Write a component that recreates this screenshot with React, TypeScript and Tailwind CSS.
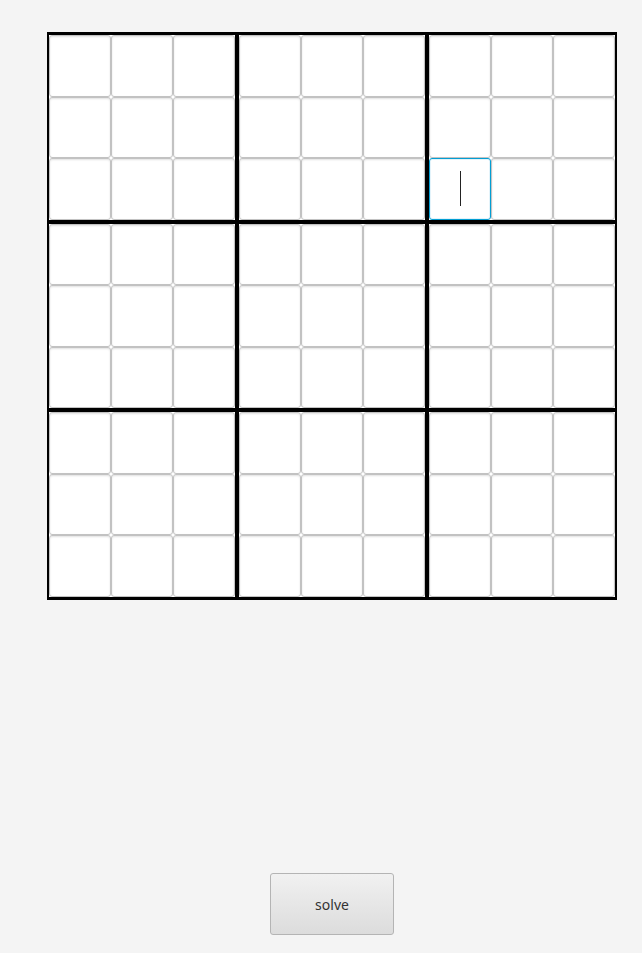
const BOXES = Array.from({ length: 9 }, (_, i) => i);
const CELLS = Array.from({ length: 9 }, (_, i) => i);

function Cell({ focused }: { focused: boolean }) {
  if (focused) {
    return (
      <div className="flex items-center justify-center rounded-[3px] border border-[#039ed3] bg-white shadow-[inset_0_0_0_1px_#e3f3fa]">
        <div className="h-[35px] w-px bg-[#222]" />
      </div>
    );
  }
  return <div className="rounded-[3px] border border-[#c2c2c2] bg-white shadow-[inset_0_1px_2px_rgba(0,0,0,0.12)]" />;
}

export default function App() {
  return (
    <div className="min-h-[953px] bg-[#f4f4f4] pl-[47px] pt-[32px]" style={{ fontFamily: "'Noto Sans', sans-serif" }}>
      <div className="flex w-[570px] flex-col items-center">
        {/* board */}
        <div className="grid h-[568px] w-[570px] grid-cols-3 grid-rows-3 gap-[4px] border-2 border-y-[3px] border-black bg-black">
          {BOXES.map(b => (
            <div key={b} className="grid grid-cols-3 grid-rows-3 bg-white">
              {CELLS.map(c => (
                <Cell key={c} focused={b === 2 && c === 6} />
              ))}
            </div>
          ))}
        </div>

        <button className="mt-[273px] h-[62px] w-[124px] rounded-[3px] border border-[#b4b4b4] bg-gradient-to-b from-[#f1f1f1] to-[#dcdcdc] text-[14px] text-[#333]">
          solve
        </button>
      </div>
    </div>
  );
}
